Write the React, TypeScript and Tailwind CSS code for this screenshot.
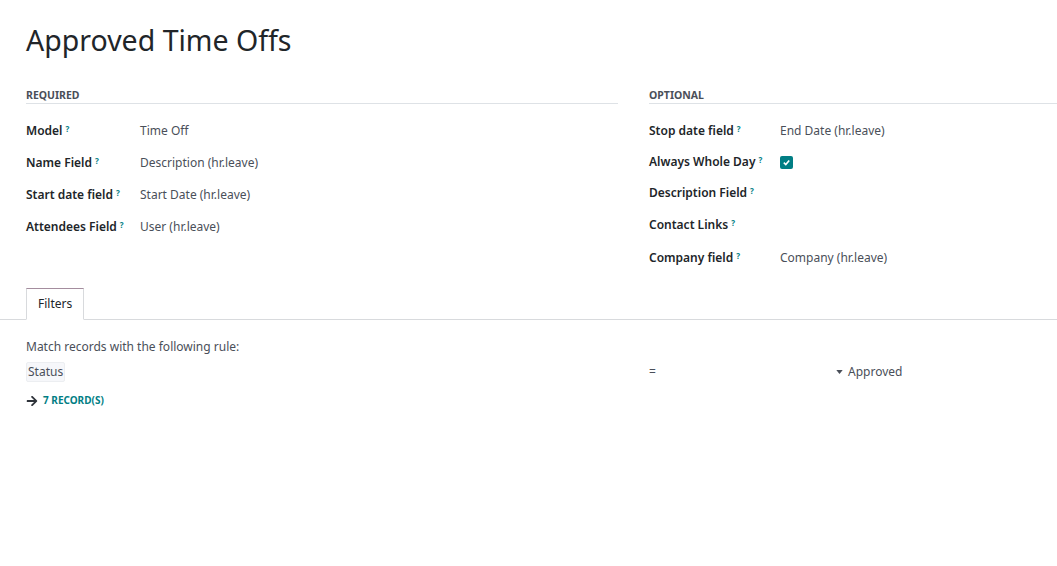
import React from "react";

const font = { fontFamily: '"Noto Sans", "Open Sans", sans-serif' };

function Help() {
  return <sup className="ml-[3px] text-[8px] font-bold text-[#017e84] relative -top-[3px]">?</sup>;
}

function Row({ label, value, labelW, h = "h-[32px]" }: { label: string; value?: string; labelW: string; h?: string }) {
  return (
    <div className={`flex ${h} items-center`}>
      <div className={`${labelW} shrink-0 text-[12px] font-semibold text-[#212529]`}>
        {label}
        <Help />
      </div>
      <div className="text-[12px] text-[#4a4f59]">{value}</div>
    </div>
  );
}

export default function App() {
  return (
    <div className="min-h-[566px] w-[1057px] bg-white" style={font}>
      <div className="px-[26px] pt-[18px]">
        <h1 className="text-[28.5px] leading-[44px] text-[#212529]">Approved Time Offs</h1>
        <div className="mt-[26px] flex">
          <div className="w-[592px]">
            <div className="border-b border-[#dee2e6] pb-[1px] text-[10.5px] font-bold leading-[14px] text-[#4a4f59]">REQUIRED</div>
            <div className="mt-[11px]">
              <Row label="Model" value="Time Off" labelW="w-[114px]" />
              <Row label="Name Field" value="Description (hr.leave)" labelW="w-[114px]" />
              <Row label="Start date field" value="Start Date (hr.leave)" labelW="w-[114px]" />
              <Row label="Attendees Field" value="User (hr.leave)" labelW="w-[114px]" />
            </div>
          </div>
          <div className="ml-[31px] flex-1 -mr-[26px]">
            <div className="border-b border-[#dee2e6] pb-[1px] text-[10.5px] font-bold leading-[14px] text-[#4a4f59]">OPTIONAL</div>
            <div className="mt-[11px]">
              <Row label="Stop date field" value="End Date (hr.leave)" labelW="w-[131px]" />
              <div className="flex h-[30px] items-center">
                <div className="w-[131px] shrink-0 text-[12px] font-semibold text-[#212529]">
                  Always Whole Day
                  <Help />
                </div>
                <span className="flex h-[13px] w-[13px] items-center justify-center rounded-[2px] bg-[#017e84]">
                  <svg width="9" height="9" viewBox="0 0 10 10">
                    <path d="M2 5.2 L4.2 7.2 L8 2.8" stroke="white" strokeWidth="1.8" fill="none" />
                  </svg>
                </span>
              </div>
              <Row label="Description Field" labelW="w-[131px]" />
              <Row label="Contact Links" labelW="w-[131px]" />
              <Row label="Company field" value="Company (hr.leave)" labelW="w-[131px]" h="h-[34px]" />
            </div>
          </div>
        </div>
      </div>
      <div className="mt-[13px] flex border-b border-[#d8dadd] px-[26px]">
        <div className="-mb-[1px] border border-b-white border-[#d8dadd] border-t-[#a48d9e] bg-white px-[11px] py-[7px] text-[12px] leading-[16px] text-[#212529]">
          Filters
        </div>
      </div>
      <div className="px-[26px] pt-[18px]">
        <div className="text-[12px] leading-[18px] text-[#4a4f59]">Match records with the following rule:</div>
        <div className="mt-[6px] flex h-[20px] items-center">
          <div className="flex w-[623px] items-center">
            <span className="rounded-[2px] border border-[#eceef1] bg-[#f6f7fa] px-[1px] text-[12px] leading-[18px] text-[#4a4f59]">Status</span>
          </div>
          <div className="w-[187px] text-[12px] leading-[20px] text-[#4a4f59]">
            <span>=</span>
          </div>
          <div className="flex items-center text-[12px] leading-[20px] text-[#4a4f59]">
            <svg width="7" height="4" viewBox="0 0 8 5" className="mr-[5px]">
              <path d="M0 0 H8 L4 5 Z" fill="#4a4f59" />
            </svg>
            Approved
          </div>
        </div>
        <div className="mt-[11px] flex h-[15px] items-center">
          <svg width="12" height="12" viewBox="0 0 448 512" className="mr-[5px]">
            <path fill="#2f343b" d="M190.5 66.9l22.2-22.2c9.4-9.4 24.6-9.4 33.9 0L441 239c9.4 9.4 9.4 24.6 0 33.9L246.6 467.3c-9.4 9.4-24.6 9.4-33.9 0l-22.2-22.2c-9.5-9.5-9.3-25 .4-34.3L311.4 296H24c-13.3 0-24-10.7-24-24v-32c0-13.3 10.7-24 24-24h287.4L190.9 101.2c-9.8-9.3-10-24.8-.4-34.3z" />
          </svg>
          <span className="text-[10px] font-bold text-[#017e84]">7 RECORD(S)</span>
        </div>
      </div>
    </div>
  );
}
